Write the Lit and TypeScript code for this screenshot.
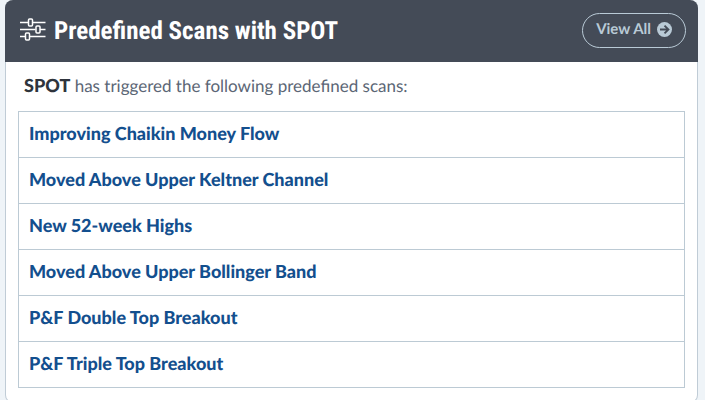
import { LitElement, html, css } from "lit";
import { customElement, property } from "lit/decorators.js";

@customElement("app-root")
export class AppRoot extends LitElement {
  @property() symbol = "SPOT";

  private scans = [
    "Improving Chaikin Money Flow",
    "Moved Above Upper Keltner Channel",
    "New 52-week Highs",
    "Moved Above Upper Bollinger Band",
    "P&F Double Top Breakout",
    "P&F Triple Top Breakout",
  ];

  static styles = css`
    :host {
      display: block;
      box-sizing: border-box;
      height: 100vh;
      overflow: hidden;
      padding: 0 7px 0 5px;
      background: #eff4f8;
      font-family: Lato, sans-serif;
      font-size: 17px;
      line-height: 24px;
      color: #5b6675;
      text-rendering: geometricPrecision;
    }
    .card {
      box-sizing: border-box;
      border: 1px solid #c0ccd6;
      border-top: 0;
      border-radius: 8px;
      background: #fff;
    }
    .head {
      display: flex;
      align-items: center;
      gap: 8px;
      height: 62px;
      box-sizing: border-box;
      margin: 0 -1px;
      padding: 0 12px 2px 15px;
      border-radius: 8px 8px 0 0;
      background: #444b57;
      color: #fff;
    }
    .sliders {
      flex: none;
      width: 26px;
      height: 24px;
    }
    .title {
      flex: 1;
      margin: 0;
      padding-top: 4px;
      font: 700 25px/32px "Roboto Condensed", Roboto, sans-serif;
      white-space: nowrap;
    }
    .all {
      display: flex;
      align-items: center;
      gap: 6px;
      box-sizing: border-box;
      height: 35px;
      padding: 0 13px 2px 13px;
      border: 1px solid #b9cad6;
      border-radius: 18px;
      color: #b9cad6;
      font-size: 15px;
      font-weight: 700;
      text-decoration: none;
      white-space: nowrap;
    }
    .arrow {
      width: 15px;
      height: 15px;
    }
    .body {
      padding: 12px 12px 14px;
    }
    .intro {
      margin: 0 0 13px;
      padding: 0 6px;
    }
    .symbol {
      font-size: 18px;
      line-height: 20px;
      font-weight: 900;
      color: #2e343c;
    }
    .list {
      margin: 0;
      padding: 0;
      list-style: none;
      border: 1px solid #bccad4;
    }
    .item + .item {
      border-top: 1px solid #bccad4;
    }
    .link {
      display: block;
      padding: 9px 10px 12px;
      color: #134f8e;
      font-size: 18px;
      font-weight: 900;
      text-decoration: none;
    }
  `;

  render() {
    return html`
      <section class="card">
        <header class="head">
          <svg class="sliders" viewBox="0 0 26 24" fill="none" stroke="#fff" stroke-width="1.5" aria-hidden="true">
            <path d="M0 4.5H8M12.5 4.5H25.5M0 11.5H15.5M20 11.5H25.5M0 18.5H5M9.5 18.5H25.5" />
            <rect x="8.5" y="1" width="4" height="7" rx="1" />
            <rect x="16" y="8" width="4" height="7" rx="1" />
            <rect x="5.5" y="15" width="4" height="7" rx="1" />
          </svg>
          <h2 class="title">Predefined Scans with ${this.symbol}</h2>
          <a class="all" href="#scans">
            View All
            <svg class="arrow" viewBox="0 0 16 16" aria-hidden="true">
              <circle cx="8" cy="8" r="8" fill="#b9cad6" />
              <path d="M3.2 8H12M8 3.8L12.2 8L8 12.2" fill="none" stroke="#444b57" stroke-width="2" />
            </svg>
          </a>
        </header>
        <div class="body">
          <p class="intro">
            <strong class="symbol">${this.symbol}</strong> has triggered the following predefined scans:
          </p>
          <ul class="list">
            ${this.scans.map(
              (name) => html`<li class="item"><a class="link" href="#scan">${name}</a></li>`
            )}
          </ul>
        </div>
      </section>
    `;
  }
}
